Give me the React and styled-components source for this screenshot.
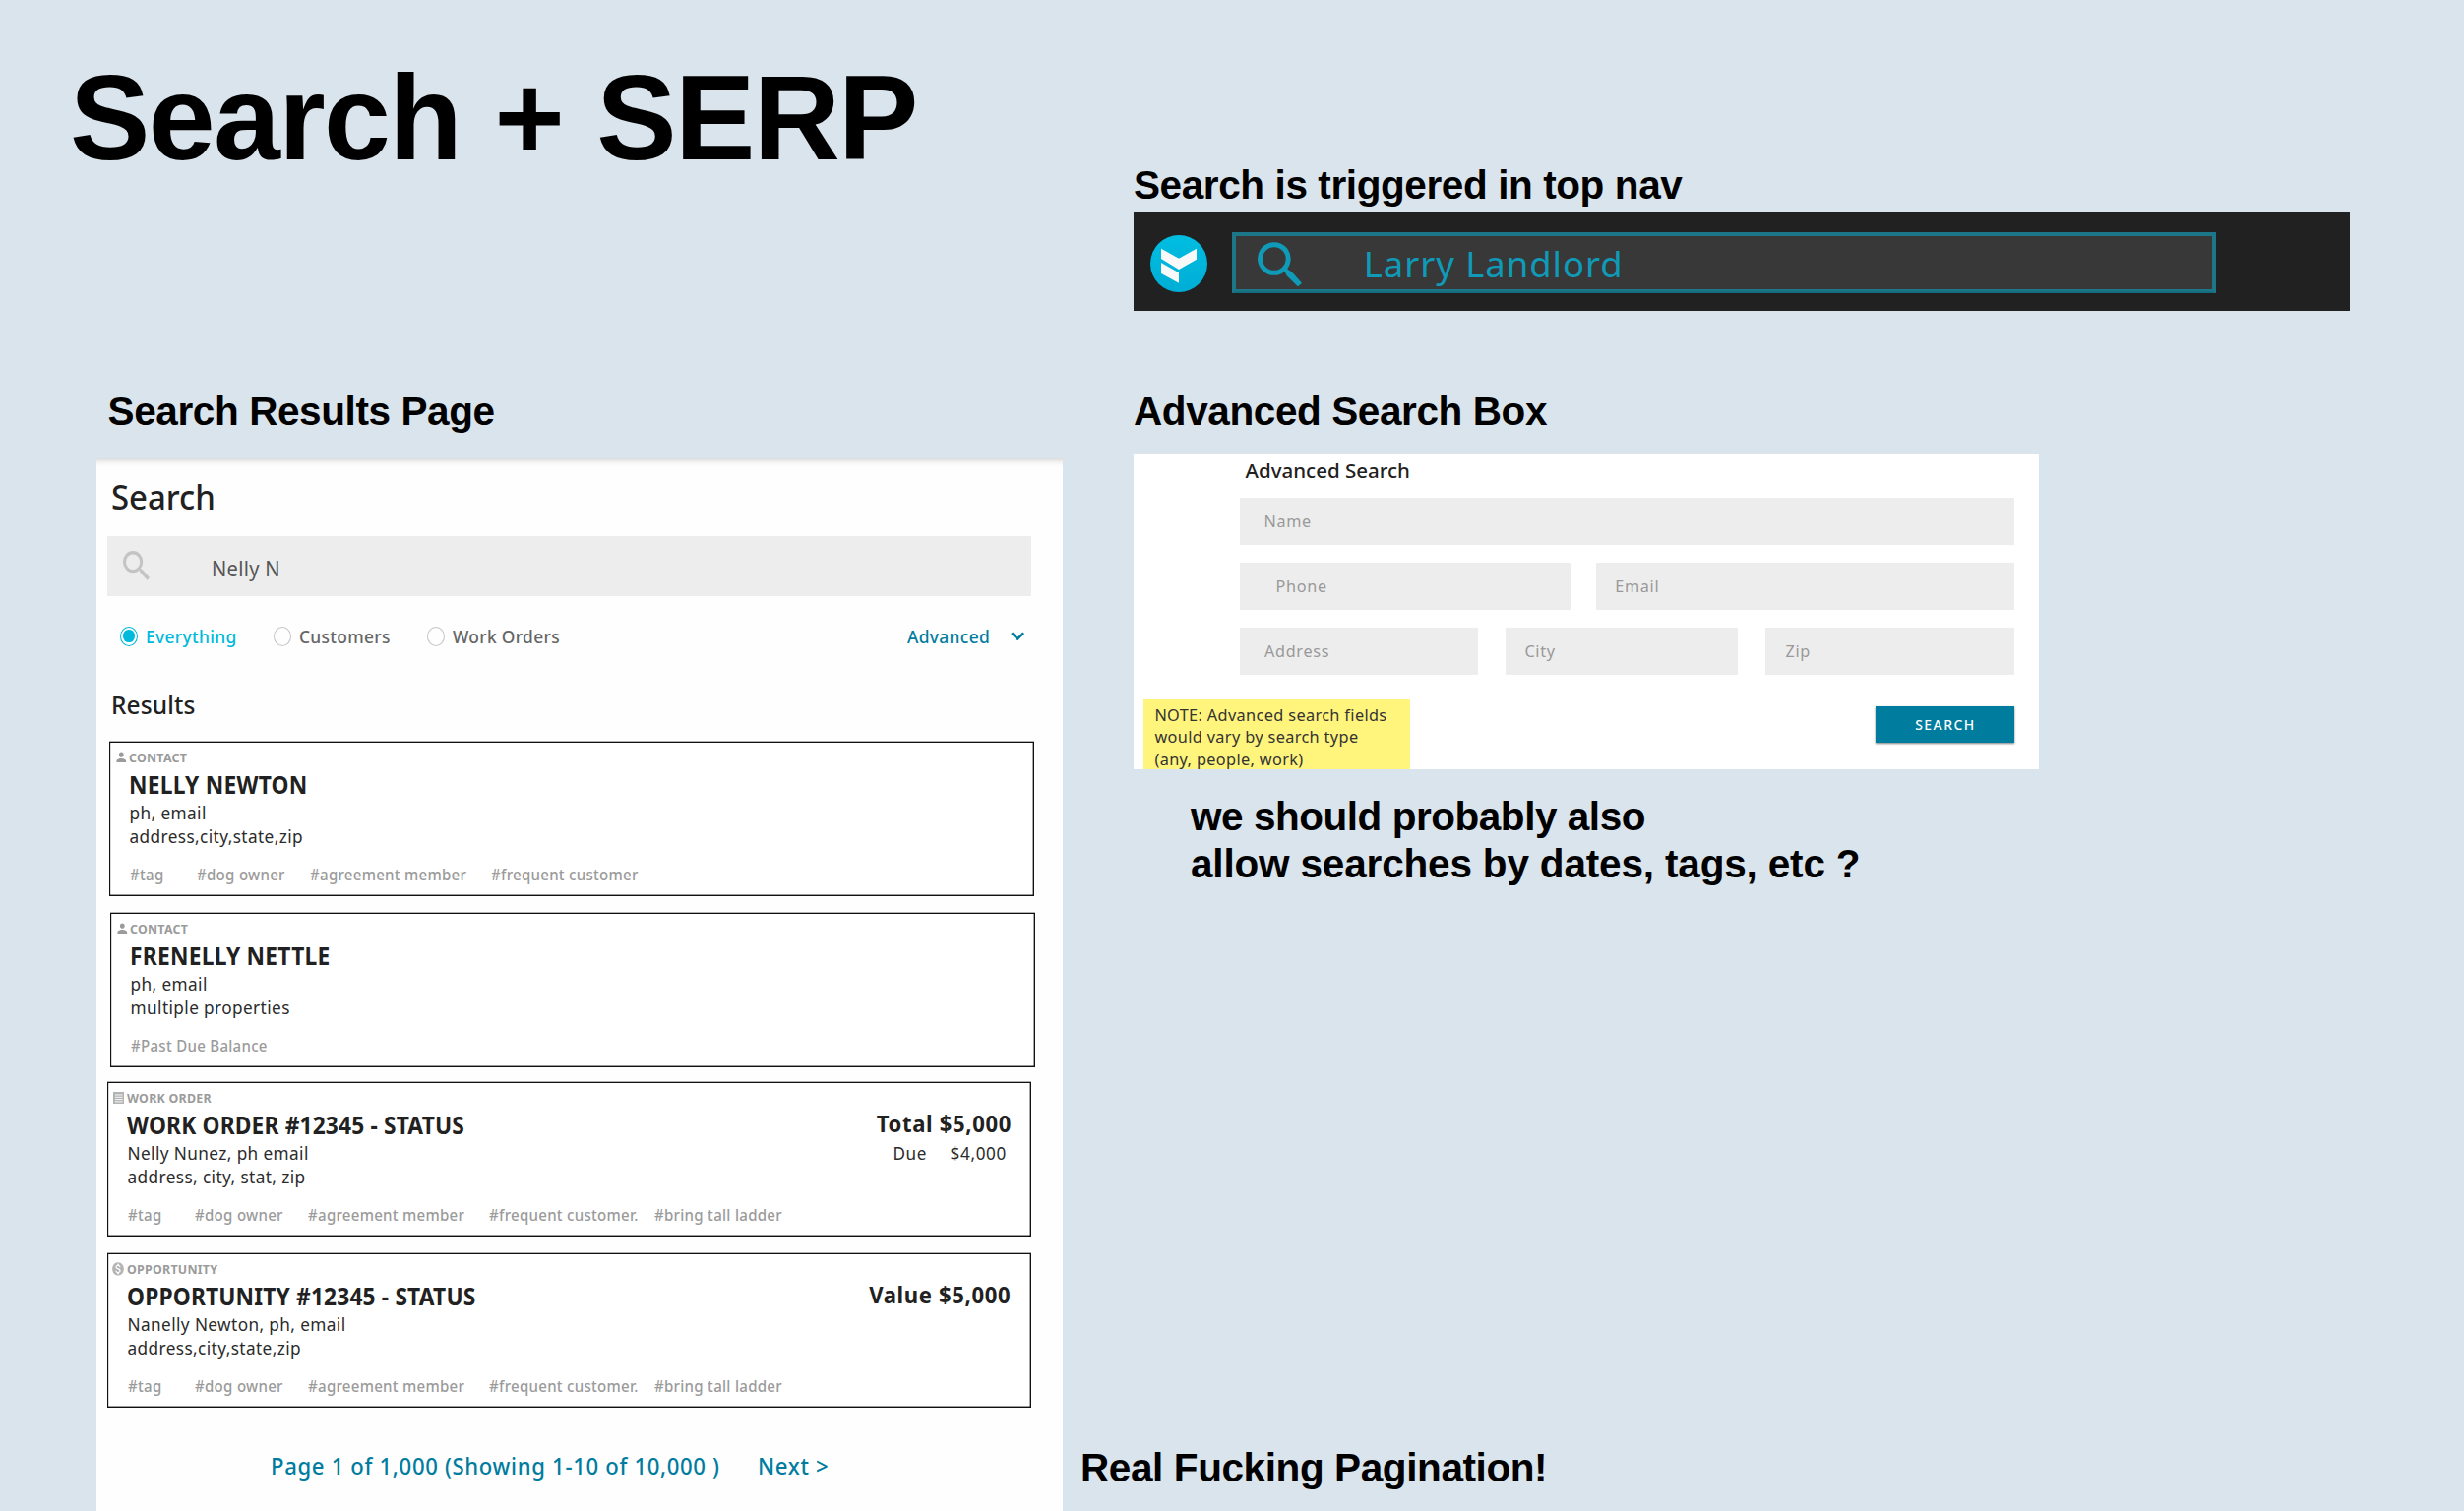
import React from 'react';
import styled, { createGlobalStyle, css } from 'styled-components';
import { MdMonetizationOn, MdPerson } from 'react-icons/md';

const GlobalStyle = createGlobalStyle`
  *, *::before, *::after { box-sizing: border-box; }
  body { margin: 0; background: #dae4ec; }
`;

const sans = '"Noto Sans", "Open Sans", sans-serif';
const grotesk = '"Liberation Sans", Arial, sans-serif';

/* ---------- board ---------- */

const Board = styled.main`
  display: flex;
  width: 2504px;
  height: 1536px;
  overflow: hidden;
  background: #dae4ec;
  color: #000;
`;

const LeftColumn = styled.div`
  display: flex;
  flex-direction: column;
  flex: none;
  width: 1098px;
  padding: 50px 18px 0 98px;
`;

const RightColumn = styled.div`
  flex: none;
  width: 1406px;
  padding-top: 163.7px;
`;

const Indented = styled.div`
  padding-left: 54px;
`;

const BoardTitle = styled.h1`
  margin: 0 0 203.7px -26.9px;
  font: bold 122px/140px ${grotesk};
  letter-spacing: -1.65px;
  word-spacing: 2px;
  white-space: nowrap;
`;

const Annotation = styled.h2`
  margin: ${(p) => p.$margin || '0'};
  font: bold 40.5px/48px ${grotesk};
  letter-spacing: -0.4px;
  white-space: nowrap;
`;

const Remark = styled.span`
  display: block;
  letter-spacing: ${(p) => p.$tracking}px;
`;

/* ---------- results panel ---------- */

const narrow = css`
  transform: scaleX(0.94);
  transform-origin: ${(p) => p.$origin || 'left'};
  white-space: nowrap;
`;

const ResultsPanel = styled.section`
  flex: 1;
  width: 982px;
  padding: 15.5px 32px 0 11px;
  background: #fefefe;
  box-shadow: inset 0 9px 8px -9px rgba(0, 0, 0, 0.28);
  font-family: ${sans};
  color: #212121;
`;

const PanelTitle = styled.h3`
  ${narrow}
  margin: 0 0 15.2px 4px;
  font-size: 35px;
  font-weight: 500;
  line-height: 48px;
  letter-spacing: 0;
`;

const SearchField = styled.div`
  display: flex;
  align-items: center;
  height: 61.6px;
  padding-left: 16px;
  background: #ededed;
  svg { width: 27px; height: 30px; color: #c4c4c4; }
`;

const Query = styled.span`
  ${narrow}
  margin-left: 63.2px;
  padding-top: 4.6px;
  font-size: 21.4px;
  letter-spacing: 0.3px;
  color: #555;
`;

const Filters = styled.div`
  display: grid;
  grid-template-columns: 155.8px 155.8px 1fr 119.3px;
  align-items: center;
  height: 26px;
  margin-top: 27.4px;
  padding: 0 7px 0 13px;
  font-size: 18.5px;
  font-weight: 500;
  line-height: 26px;
  letter-spacing: 0.34px;
`;

const Filter = styled.label`
  display: flex;
  align-items: center;
  gap: 8.2px;
  color: ${(p) => (p.$on ? '#00b9dc' : '#666')};
`;

const FilterText = styled.span`
  ${narrow}
`;

const Radio = styled.span`
  display: flex;
  align-items: center;
  justify-content: center;
  flex: none;
  width: 18px;
  height: 20px;
  border: ${(p) => (p.$on ? '1.5px solid #00b9dc' : '1px solid #c6c6c6')};
  border-radius: 50%;
  &::after {
    content: '';
    display: ${(p) => (p.$on ? 'block' : 'none')};
    width: 11.4px;
    height: 12.6px;
    border-radius: 50%;
    background: #00b9dc;
  }
`;

const AdvancedToggle = styled.div`
  display: flex;
  align-items: center;
  justify-content: space-between;
  color: #007c9f;
`;

const ResultsTitle = styled.h4`
  ${narrow}
  margin: 38.1px 0 20.2px 3.6px;
  font-size: 26px;
  font-weight: 500;
  line-height: 36px;
  letter-spacing: 0.15px;
`;

const Card = styled.article`
  width: ${(p) => p.$width}px;
  height: 157px;
  margin: 0 0 ${(p) => p.$gap}px ${(p) => p.$shift}px;
  padding: 5.9px 19.5px 0 4.6px;
  border: 1px solid #111;
  background: #fff;
  box-shadow: 0 -1px 0 rgba(0, 0, 0, 0.3), inset 0 -1px 0 rgba(0, 0, 0, 0.4),
    inset 1px 0 0 rgba(0, 0, 0, 0.15), inset -1px 0 0 rgba(0, 0, 0, 0.35);
`;

const CardType = styled.div`
  display: grid;
  grid-template-columns: 14px 1fr;
  align-items: center;
  height: 18px;
  font-size: 13.2px;
  font-weight: 700;
  line-height: 18px;
  letter-spacing: 0.27px;
  color: #9b9b9b;
`;

const TypeText = styled.span`
  ${narrow}
`;

const CardBody = styled.div`
  display: flex;
  justify-content: space-between;
  height: 83.1px;
  padding: 3.5px 0 0 14.2px;
`;

const CardTitle = styled.div`
  ${narrow}
  font-size: 24.2px;
  font-weight: 700;
  line-height: 32px;
  letter-spacing: ${(p) => (p.$long ? 0.18 : 0.28)}px;
`;

const CardLine = styled.div`
  ${narrow}
  padding-left: 0.6px;
  font-size: 18.3px;
  line-height: 24px;
  letter-spacing: 0.43px;
  color: #2b2b2b;
`;

const Amounts = styled.div`
  display: flex;
  flex-direction: column;
  align-items: flex-end;
  margin-top: -2.8px;
`;

const MainAmount = styled.div`
  ${narrow}
  font-size: 23.5px;
  font-weight: 700;
  line-height: 32px;
  letter-spacing: 0.67px;
`;

const DueAmount = styled.div`
  ${narrow}
  display: flex;
  gap: 25px;
  margin-top: 2.8px;
  margin-right: 4.2px;
  font-size: 18.2px;
  line-height: 24px;
  letter-spacing: 0.7px;
  color: #2b2b2b;
`;

const Tags = styled.div`
  display: grid;
  grid-template-columns: 68.2px 115px 184.4px 167.8px auto;
  margin-top: 16.1px;
  padding-left: 15.2px;
  font-size: 16px;
  font-weight: 500;
  line-height: 22px;
  letter-spacing: 0.3px;
  color: #9b9b9b;
`;

const Tag = styled.span`
  ${narrow}
`;

const Pagination = styled.nav`
  display: grid;
  grid-template-columns: 495.3px auto;
  margin: 43.6px 0 0 166.2px;
  font-size: 22.8px;
  font-weight: 500;
  line-height: 32px;
  letter-spacing: 0.69px;
  white-space: nowrap;
  color: #007c9f;
`;

const PageLabel = styled.span`
  transform: scaleX(0.97);
  transform-origin: left;
`;

/* ---------- top nav ---------- */

const TopNav = styled.div`
  display: flex;
  align-items: flex-start;
  width: 1236px;
  height: 100px;
  margin: 4.3px 0 77.7px;
  padding: 20px 0 0 17px;
  background: #212121;
`;

const Logo = styled.svg`
  flex: none;
  width: 58px;
  height: 58px;
  margin: 3px 25px 0 0;
`;

const NavSearch = styled.div`
  display: flex;
  align-items: center;
  width: 1000px;
  height: 62px;
  padding: 1px 0 0 22px;
  border: 4px solid #1c7888;
  border-bottom: 2px solid #146c7d;
  background: #383838;
  box-shadow: inset 0 -2px 0 #1c7888;
  font: 36.4px/54px ${sans};
  letter-spacing: 1px;
  color: #0f9bb8;
  svg { width: 45px; height: 45.7px; margin-right: 62.7px; }
`;

/* ---------- advanced search ---------- */

const AdvancedPanel = styled.section`
  width: 920px;
  height: 320px;
  margin: 20.3px 0 24px;
  padding: 2px 25px 0 108px;
  overflow: hidden;
  background: #fff;
  font-family: ${sans};
`;

const AdvancedTitle = styled.h3`
  margin: 0 0 14px 5.6px;
  font-size: 20.5px;
  font-weight: 500;
  line-height: 28px;
  color: #212121;
`;

const FieldRow = styled.div`
  display: grid;
  grid-template-columns: ${(p) => p.$columns};
  column-gap: ${(p) => p.$gap || 0}px;
  margin-bottom: 18.1px;
`;

const Field = styled.div`
  height: 48px;
  padding-left: ${(p) => p.$indent}px;
  background: #ededed;
  font-size: 16.2px;
  line-height: 48.6px;
  letter-spacing: 0.7px;
  color: #999;
`;

const AdvancedFooter = styled.div`
  display: flex;
  align-items: flex-start;
  justify-content: space-between;
  margin: 25.3px 0 0 -98px;
`;

const StickyNote = styled.p`
  width: 270.5px;
  height: 80px;
  margin: 0;
  padding: 4.4px 0 0 11.4px;
  background: #fff47c;
  font-size: 16.3px;
  line-height: 22.5px;
  letter-spacing: 0.36px;
  white-space: nowrap;
  color: #333;
`;

const SearchButton = styled.button`
  width: 141px;
  height: 37px;
  margin-top: 6.7px;
  padding: 0 0 0 1px;
  border: 0;
  background: #007c9f;
  box-shadow: 0 1px 2px rgba(0, 0, 0, 0.5);
  font: 500 14px/37px ${sans};
  letter-spacing: 1.45px;
  color: #fff;
`;

/* ---------- icons ---------- */

const SearchIcon = () => (
  <svg viewBox="0 0 135 137" preserveAspectRatio="none" aria-hidden="true">
    <circle cx="50.5" cy="51" r="43" fill="none" stroke="currentColor" strokeWidth="15" />
    <path d="M78 84 86 76 94 85 104 91 135 125 123 136 89 103 84 93Z" fill="currentColor" />
  </svg>
);

const BrandLogo = () => (
  <Logo viewBox="57 57 174 174" aria-hidden="true">
    <defs>
      <linearGradient id="brand" x1="0" y1="0" x2="0" y2="1">
        <stop offset="0" stopColor="#00bee1" />
        <stop offset="1" stopColor="#00add5" />
      </linearGradient>
    </defs>
    <circle cx="144" cy="144" r="87" fill="url(#brand)" />
    <path d="M90 98 144 128 198 98V131L144 162 90 129Z" fill="#f9f9f9" />
    <path d="M90 141 144 172V203L90 174Z" fill="#f9f9f9" />
  </Logo>
);

const Chevron = () => (
  <svg width="14.4" height="9.4" viewBox="0 0 14.4 9.4" aria-hidden="true">
    <path d="M1.2 1.3 7.2 7.5 13.2 1.3" fill="none" stroke="currentColor" strokeWidth="2.6" />
  </svg>
);

const WorkOrderIcon = () => (
  <svg width="11.6" height="12.6" viewBox="0 0 11.6 12.6" aria-hidden="true">
    <path d="M0 0H11.6V12.6H0Z" fill="#b4b4b4" />
    <path d="M2 3H9.6M2 5.3H9.6M2 7.6H9.6M2 9.9H9.6" stroke="#fff" strokeWidth="0.9" />
  </svg>
);

const PersonSlot = styled.span`
  display: flex;
  margin-left: -0.6px;
  svg { width: 15px; height: 15.6px; }
`;

const CoinSlot = styled.span`
  display: flex;
  margin-left: -1.2px;
  color: #b4b4b4;
  svg { width: 14px; height: 15.8px; }
`;

const typeIcons = {
  CONTACT: <PersonSlot><MdPerson preserveAspectRatio="none" /></PersonSlot>,
  'WORK ORDER': <WorkOrderIcon />,
  OPPORTUNITY: <CoinSlot><MdMonetizationOn preserveAspectRatio="none" /></CoinSlot>,
};

/* ---------- content ---------- */

const results = [
  {
    type: 'CONTACT', title: 'NELLY NEWTON', width: 940, shift: 2, gap: 17,
    lines: ['ph, email', 'address,city,state,zip'],
    tags: ['#tag', '#dog owner', '#agreement member', '#frequent customer'],
  },
  {
    type: 'CONTACT', title: 'FRENELLY NETTLE', width: 940, shift: 3, gap: 15,
    lines: ['ph, email', 'multiple properties'],
    tags: ['#Past Due Balance'],
  },
  {
    type: 'WORK ORDER', title: 'WORK ORDER #12345 - STATUS', width: 939, shift: 0, gap: 17,
    lines: ['Nelly Nunez, ph email', 'address, city, stat, zip'],
    tags: ['#tag', '#dog owner', '#agreement member', '#frequent customer.', '#bring tall ladder'],
    amount: 'Total $5,000', due: '$4,000',
  },
  {
    type: 'OPPORTUNITY', title: 'OPPORTUNITY #12345 - STATUS', width: 939, shift: 0, gap: 0,
    lines: ['Nanelly Newton, ph, email', 'address,city,state,zip'],
    tags: ['#tag', '#dog owner', '#agreement member', '#frequent customer.', '#bring tall ladder'],
    amount: 'Value $5,000',
  },
];

const ResultCard = ({ result }) => (
  <Card $width={result.width} $shift={result.shift} $gap={result.gap}>
    <CardType>
      {typeIcons[result.type]}
      <TypeText>{result.type}</TypeText>
    </CardType>
    <CardBody>
      <div>
        <CardTitle $long={result.title.includes('#')}>{result.title}</CardTitle>
        {result.lines.map((line) => <CardLine key={line}>{line}</CardLine>)}
      </div>
      {result.amount && (
        <Amounts>
          <MainAmount $origin="right">{result.amount}</MainAmount>
          {result.due && (
            <DueAmount $origin="right"><span>Due</span><span>{result.due}</span></DueAmount>
          )}
        </Amounts>
      )}
    </CardBody>
    <Tags>{result.tags.map((tag) => <Tag key={tag}>{tag}</Tag>)}</Tags>
  </Card>
);

export default function App() {
  return (
    <>
      <GlobalStyle />
      <Board>
        <LeftColumn>
          <BoardTitle>Search + SERP</BoardTitle>
          <Annotation $margin="0 0 24.3px 11.6px">Search Results Page</Annotation>
          <ResultsPanel>
            <PanelTitle>Search</PanelTitle>
            <SearchField>
              <SearchIcon />
              <Query>Nelly N</Query>
            </SearchField>
            <Filters>
              {['Everything', 'Customers', 'Work Orders'].map((name, i) => (
                <Filter key={name} $on={i === 0}>
                  <Radio $on={i === 0} />
                  <FilterText>{name}</FilterText>
                </Filter>
              ))}
              <AdvancedToggle>
                <FilterText>Advanced</FilterText>
                <Chevron />
              </AdvancedToggle>
            </Filters>
            <ResultsTitle>Results</ResultsTitle>
            {results.map((result) => <ResultCard key={result.title} result={result} />)}
            <Pagination>
              <PageLabel>Page 1 of 1,000 (Showing 1-10 of 10,000 )</PageLabel>
              <PageLabel>Next &gt;</PageLabel>
            </Pagination>
          </ResultsPanel>
        </LeftColumn>

        <RightColumn>
          <Indented>
            <Annotation>Search is triggered in top nav</Annotation>
            <TopNav>
              <BrandLogo />
              <NavSearch>
                <SearchIcon />
                <span>Larry Landlord</span>
              </NavSearch>
            </TopNav>
            <Annotation>Advanced Search Box</Annotation>
            <AdvancedPanel>
              <AdvancedTitle>Advanced Search</AdvancedTitle>
              <FieldRow $columns="1fr">
                <Field $indent={24.4}>Name</Field>
              </FieldRow>
              <FieldRow $columns="337px 425px" $gap={25}>
                <Field $indent={36.5}>Phone</Field>
                <Field $indent={19.2}>Email</Field>
              </FieldRow>
              <FieldRow $columns="242px 236px 253px" $gap={28}>
                <Field $indent={25}>Address</Field>
                <Field $indent={19.4}>City</Field>
                <Field $indent={20.5}>Zip</Field>
              </FieldRow>
              <AdvancedFooter>
                <StickyNote>
                  NOTE: Advanced search fields<br />
                  would vary by search type<br />
                  (any, people, work)
                </StickyNote>
                <SearchButton>SEARCH</SearchButton>
              </AdvancedFooter>
            </AdvancedPanel>
            <Annotation $margin="0 0 566.3px 58px">
              <Remark $tracking={-0.46}>we should probably also</Remark>
              <Remark $tracking={-0.17}>allow searches by dates, tags, etc ?</Remark>
            </Annotation>
          </Indented>
          <Annotation>Real Fucking Pagination!</Annotation>
        </RightColumn>
      </Board>
    </>
  );
}
